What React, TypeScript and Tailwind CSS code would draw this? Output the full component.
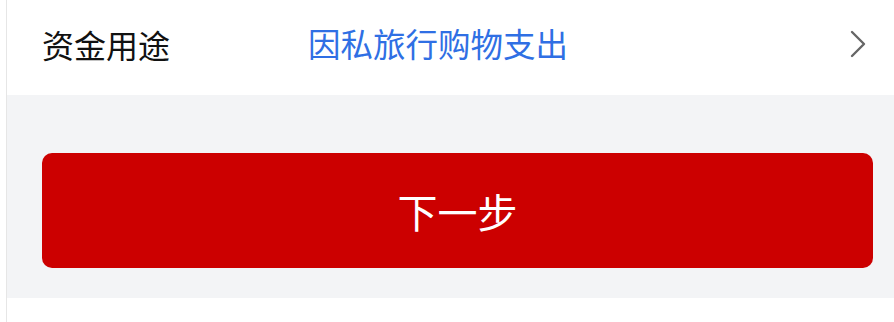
export default function App() {
  return (
    <div
      className="w-[894px] h-[322px] bg-white pl-[6px] overflow-hidden"
      style={{ fontFamily: '"PingFang SC", "Noto Sans CJK SC", sans-serif' }}
    >
      <div className="h-full border-l border-[#e6e6e6] flex flex-col">
        <div className="h-[95px] flex items-center pl-[35px] pr-[27px] pb-[8px] bg-white">
          <span className="w-[266px] text-[32px] leading-none text-[#111111]">资金用途</span>
          <span className="flex-1 text-[32.5px] leading-none text-[#2f6fe4]">因私旅行购物支出</span>
          <svg width="18" height="28" viewBox="0 0 18 28" fill="none" className="shrink-0">
            <path d="M3 2 L15 14 L3 26" stroke="#666666" strokeWidth="2.4" strokeLinecap="round" strokeLinejoin="round" />
          </svg>
        </div>
        <div className="h-[203px] bg-[#f3f4f6] pt-[58px] pl-[35px] pr-[21px]">
          <button className="w-full h-[115px] rounded-[10px] bg-[#cc0000] text-white text-[40px] leading-none flex items-center justify-center">
            下一步
          </button>
        </div>
        <div className="flex-1 bg-white" />
      </div>
    </div>
  )
}
